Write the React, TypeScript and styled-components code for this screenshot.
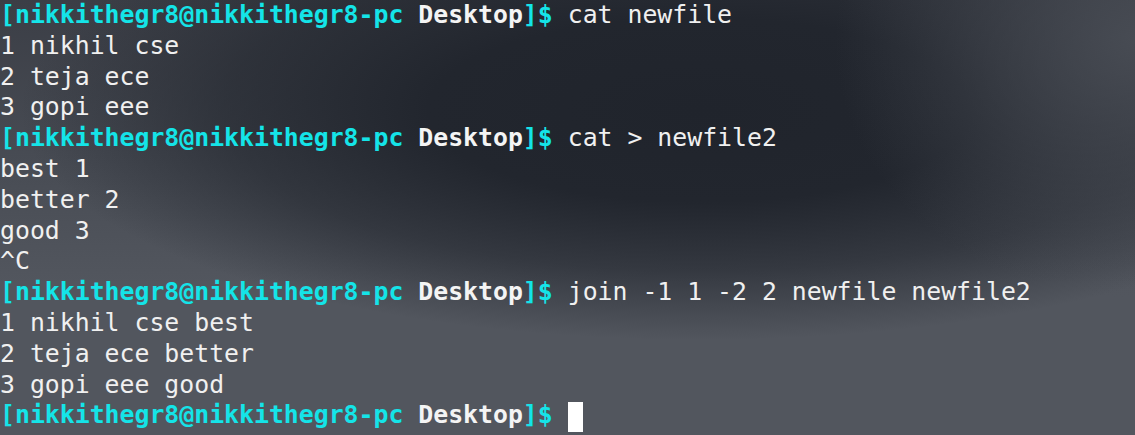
import React from 'react';
import styled, { createGlobalStyle } from 'styled-components';

const GlobalStyle = createGlobalStyle`
  html, body {
    margin: 0;
    padding: 0;
    background: #52565e;
  }
`;

const Screen = styled.div`
  width: 1135px;
  height: 435px;
  overflow: hidden;
  box-sizing: border-box;
  padding-top: 0;
  background:
    radial-gradient(ellipse 300px 260px at 1135px 40px, rgba(74, 78, 86, 0.9) 0%, rgba(74, 78, 86, 0) 100%),
    radial-gradient(ellipse 680px 230px at 700px 110px, #20242c 0%, #22262e 40%, rgba(34, 38, 46, 0.6) 70%, rgba(34, 38, 46, 0) 100%),
    linear-gradient(180deg, #3b3e46 0%, #474b53 35%, #52565e 65%, #52565e 100%);
  font-family: "DejaVu Sans Mono", "Liberation Mono", monospace;
  font-size: 24.82px;
  color: #f2f2f2;
`;

const Line = styled.div`
  height: 30.8px;
  line-height: 30.8px;
  white-space: pre;
  display: flex;
  align-items: center;
`;

const Bracket = styled.span`
  color: #14e4e8;
  font-weight: bold;
`;

const Dir = styled.span`
  color: #f4f4f4;
  font-weight: bold;
`;

const Cmd = styled.span`
  color: #f0f0f0;
`;

const Cursor = styled.span`
  display: inline-block;
  width: 15px;
  height: 30px;
  margin-top: 2px;
  background: #ffffff;
`;

type Row = { prompt?: boolean; text: string; cursor?: boolean };

const rows: Row[] = [
  { prompt: true, text: 'cat newfile' },
  { text: '1 nikhil cse' },
  { text: '2 teja ece' },
  { text: '3 gopi eee' },
  { prompt: true, text: 'cat > newfile2' },
  { text: 'best 1' },
  { text: 'better 2' },
  { text: 'good 3' },
  { text: '^C' },
  { prompt: true, text: 'join -1 1 -2 2 newfile newfile2' },
  { text: '1 nikhil cse best' },
  { text: '2 teja ece better' },
  { text: '3 gopi eee good' },
  { prompt: true, text: '', cursor: true },
];

const Prompt = () => (
  <>
    <Bracket>[nikkithegr8@nikkithegr8-pc</Bracket>
    <Dir> Desktop</Dir>
    <Bracket>]$</Bracket>
    <Cmd> </Cmd>
  </>
);

export default function App() {
  return (
    <>
      <GlobalStyle />
      <Screen>
        {rows.map((r, i) => (
          <Line key={i}>
            {r.prompt && <Prompt />}
            {r.text && <Cmd>{r.text}</Cmd>}
            {r.cursor && <Cursor />}
          </Line>
        ))}
      </Screen>
    </>
  );
}
